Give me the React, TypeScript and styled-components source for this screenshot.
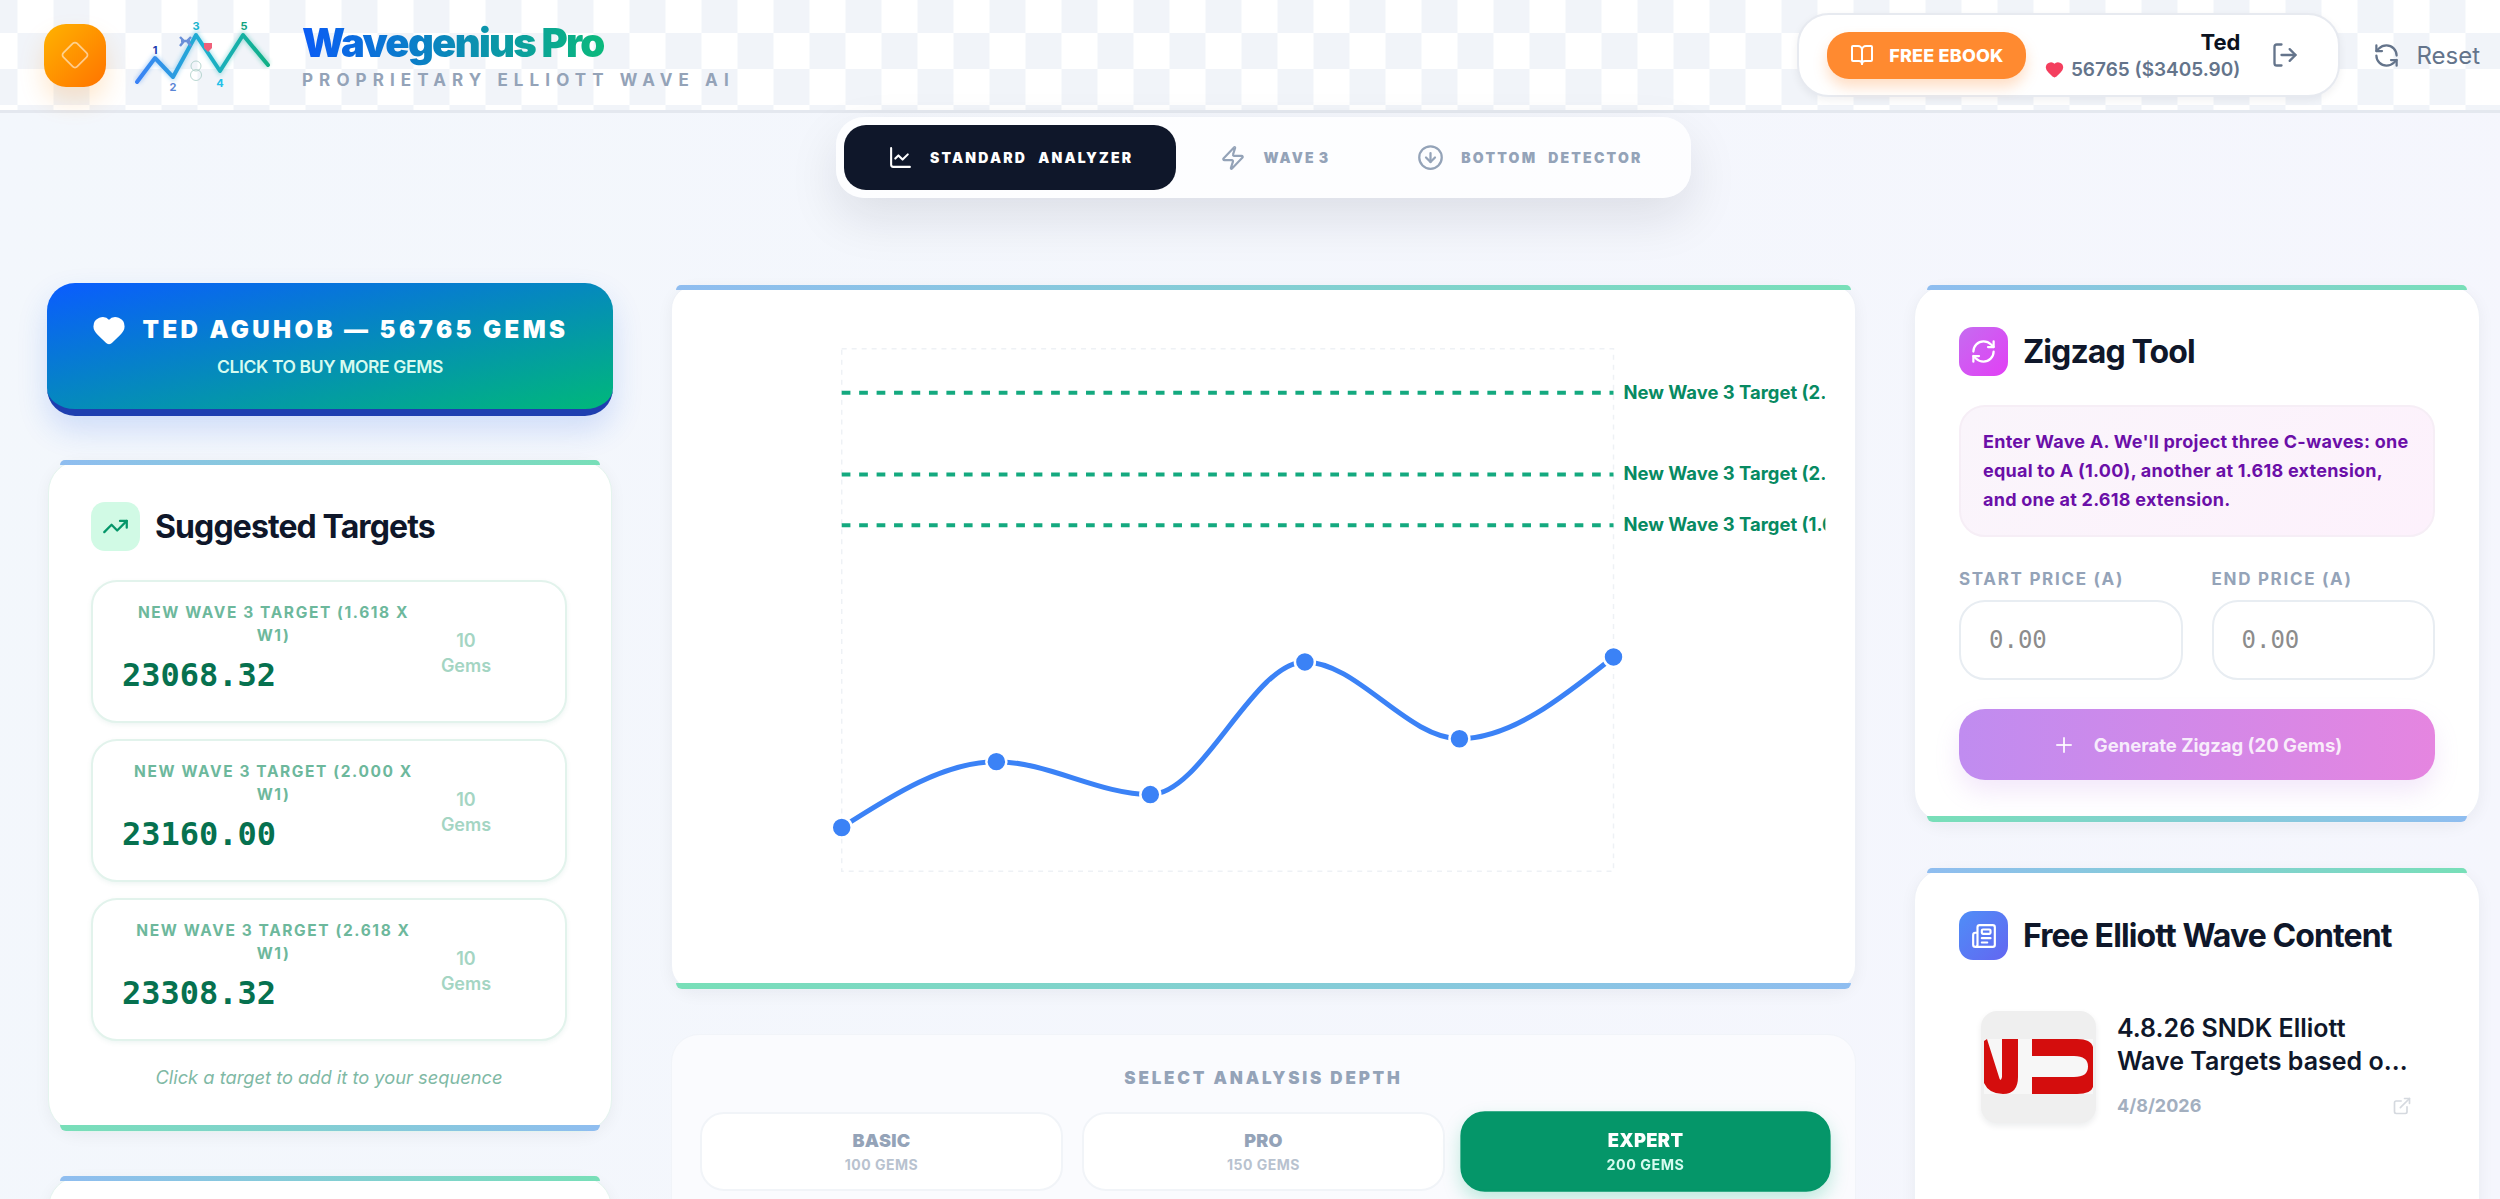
import React from 'react'
import styled, { createGlobalStyle } from 'styled-components';
import {
    BookOpen, ChartLine, CircleArrowDown, Diamond, ExternalLink, Heart, LogOut,
    Newspaper, Plus, RefreshCcw, RefreshCw, TrendingUp, Zap,
} from 'lucide-react';

const targets = [
    { label: "New Wave 3 Target (1.618 x W1)", value: "23068.32" },
    { label: "New Wave 3 Target (2.000 x W1)", value: "23160.00" },
    { label: "New Wave 3 Target (2.618 x W1)", value: "23308.32" },
];

const chartPoints = [
    [840.5, 828], [995.6, 762], [1150, 795], [1305, 662], [1460, 739], [1614.5, 657],
];

const chartLines = [
    { y: 392, label: "New Wave 3 Target (2.618 x W1)" },
    { y: 474, label: "New Wave 3 Target (2.000 x W1)" },
    { y: 525, label: "New Wave 3 Target (1.618 x W1)" },
];

const depths = [
    { name: "Basic", gems: "100 Gems", active: false },
    { name: "Pro", gems: "150 Gems", active: false },
    { name: "Expert", gems: "200 Gems", active: true },
];

const WaveLogo = () => (
    <LogoSvg viewBox="133 8 140 74">
        <defs>
            <linearGradient id="waveStroke" x1="137" x2="268" y1="0" y2="0" gradientUnits="userSpaceOnUse">
                <stop offset="0" stopColor="#3b82f6" />
                <stop offset="0.5" stopColor="#1eb0d0" />
                <stop offset="1" stopColor="#10b085" />
            </linearGradient>
            <filter id="waveGlow" x="-10%" y="-20%" width="120%" height="140%">
                <feGaussianBlur stdDeviation="2" />
            </filter>
        </defs>
        <polyline points="137,72 155,48 173,67 196,25 220,61 243,25 268,55" fill="none" stroke="url(#waveStroke)" strokeWidth="6" opacity="0.35" filter="url(#waveGlow)" />
        <polyline points="137,72 155,48 173,67 196,25 220,61 243,25 268,55" fill="none" stroke="url(#waveStroke)" strokeWidth="4" strokeLinecap="round" strokeLinejoin="round" />
        <g fontFamily="Inter, sans-serif" fontSize="11" fontWeight="700" textAnchor="middle">
            <text x="155" y="44" fill="#1e40af">1</text>
            <text x="173" y="81" fill="#5b86d6">2</text>
            <text x="196" y="20" fill="#1bb5cf">3</text>
            <text x="220" y="77" fill="#22c0e8">4</text>
            <text x="244" y="20" fill="#10a37f">5</text>
        </g>
        <path d="M180 27l4 4-4 5M191 27l-4 4 4 5M181 31h9" fill="none" stroke="#6a8fd8" strokeWidth="2.4" />
        <path d="M204 33h8v5l-4 4-4-4z" fill="#f0607a" />
        <circle cx="196" cy="56" r="5" fill="none" stroke="#9cc5bd" strokeWidth="0.7" />
        <circle cx="196" cy="65" r="5.5" fill="none" stroke="#9cc5bd" strokeWidth="0.7" />
    </LogoSvg>
);

const TargetChart = () => {
    const curve = "M840.5 828C892 795 944 762 995.6 762C1047 762 1098.7 795 1150 795C1202 795 1253 662 1305 662C1357 662 1408 739 1460 739C1511.5 739 1563 698 1614.5 657";
    return (
        <ChartSvg viewBox="671 285 1185 705">
            <defs>
                <clipPath id="chartClip">
                    <rect x="671" y="285" width="1156" height="705" />
                </clipPath>
            </defs>
            <rect x="840.5" y="348" width="774" height="524" fill="none" stroke="#eef1f5" strokeWidth="1.5" strokeDasharray="5 5" />
            <g clipPath="url(#chartClip)">
                {chartLines.map((line) => (
                    <g key={line.y}>
                        <line x1="840.5" x2="1614.5" y1={line.y} y2={line.y} stroke="#14a97f" strokeWidth="4" strokeDasharray="8.75 8.75" />
                        <ChartLabel x="1624.5" y={line.y + 6}>{line.label}</ChartLabel>
                    </g>
                ))}
            </g>
            <path d={curve} fill="none" stroke="#3b82f6" strokeWidth="5" />
            {chartPoints.map(([x, y]) => (
                <circle key={x} cx={x} cy={y} r="10" fill="#3b82f6" stroke="#fff" strokeWidth="2.5" />
            ))}
        </ChartSvg>
    );
};

const PostThumb = () => (
    <ThumbSvg viewBox="0 0 115 112">
        <rect x="3" y="28" width="109" height="55" fill="#f7f7f7" />
        <path d="M3 30L6 28L18 66Q19.500 72 21 66V28H37V66Q37 83 22 83Q8 83 3 72Z" fill="#d40d0d" />
        <path d="M51 28H96Q110 28 112 36V76Q110 83 96 83H51V66H93Q107 66 107 55.500Q107 45 93 45H51Z" fill="#d40d0d" />
    </ThumbSvg>
);

const App = () => {
    return (
        <>
            <GlobalStyle />
            <Page>
                <Header>
                    <Brand>
                        <LogoBadge><Diamond size={30} strokeWidth={1.4} /></LogoBadge>
                        <WaveLogo />
                        <BrandText>
                            <BrandTitle>Wavegenius Pro</BrandTitle>
                            <BrandSub>Proprietary Elliott Wave AI</BrandSub>
                        </BrandText>
                    </Brand>
                    <HeaderRight>
                        <UserBox>
                            <EbookButton><BookOpen size={24} strokeWidth={2} />Free Ebook</EbookButton>
                            <UserInfo>
                                <UserName>Ted</UserName>
                                <UserGems><Heart size={19} fill="#f43f5e" color="#f43f5e" />56765 ($3405.90)</UserGems>
                            </UserInfo>
                            <LogoutButton><LogOut size={28} strokeWidth={2} /></LogoutButton>
                        </UserBox>
                        <ResetButton><RefreshCcw size={27} strokeWidth={2} />Reset</ResetButton>
                    </HeaderRight>
                </Header>

                <TabsRow>
                    <Tabs>
                        <Tab $active $wordGap={6}><ChartLine size={25} strokeWidth={2} />Standard Analyzer</Tab>
                        <Tab $wordGap={-2}><Zap size={26} strokeWidth={2} />Wave 3</Tab>
                        <Tab $wordGap={6}><CircleArrowDown size={27} strokeWidth={2} />Bottom Detector</Tab>
                    </Tabs>
                </TabsRow>

                <Main>
                    <Column>
                        <GemButton>
                            <GemTitle><Heart size={34} fill="#fff" color="#fff" />Ted Aguhob — 56765 Gems</GemTitle>
                            <GemSub>Click to buy more gems</GemSub>
                        </GemButton>
                        <TargetsCard $inset={11} $bottomBar $green>
                            <CardHeader>
                                <IconBox $bg="#d1fae5"><TrendingUp size={27} color="#059669" strokeWidth={2} /></IconBox>
                                <CardTitle>Suggested Targets</CardTitle>
                            </CardHeader>
                            <TargetList>
                                {targets.map((target) => (
                                    <TargetRow key={target.value}>
                                        <TargetInfo>
                                            <TargetLabel>{target.label}</TargetLabel>
                                            <TargetValue>{target.value}</TargetValue>
                                        </TargetInfo>
                                        <TargetCost>10<br />Gems</TargetCost>
                                    </TargetRow>
                                ))}
                            </TargetList>
                            <TargetHint>Click a target to add it to your sequence</TargetHint>
                        </TargetsCard>
                        <Card $inset={11} $green />
                    </Column>

                    <CenterColumn>
                        <ChartCard $inset={4} $bottomBar>
                            <TargetChart />
                        </ChartCard>
                        <DepthPanel>
                            <DepthTitle>Select Analysis Depth</DepthTitle>
                            <DepthGrid>
                                {depths.map((depth) => (
                                    <DepthButton key={depth.name} $active={depth.active}>
                                        <DepthName>{depth.name}</DepthName>
                                        <DepthGems $active={depth.active}>{depth.gems}</DepthGems>
                                    </DepthButton>
                                ))}
                            </DepthGrid>
                        </DepthPanel>
                    </CenterColumn>

                    <RightColumn>
                        <ZigzagCard $inset={12} $bottomBar>
                            <CardHeader>
                                <IconBox $bg="linear-gradient(135deg, #c56cf0, #e23ff5)"><RefreshCw size={27} color="#fff" strokeWidth={2} /></IconBox>
                                <CardTitle>Zigzag Tool</CardTitle>
                            </CardHeader>
                            <InfoBox>Enter Wave A. We'll project three C-waves: one equal to A (1.00), another at 1.618 extension, and one at 2.618 extension.</InfoBox>
                            <PriceGrid>
                                <PriceField>
                                    <PriceLabel>Start Price (A)</PriceLabel>
                                    <PriceInput type="text" placeholder="0.00" />
                                </PriceField>
                                <PriceField>
                                    <PriceLabel>End Price (A)</PriceLabel>
                                    <PriceInput type="text" placeholder="0.00" />
                                </PriceField>
                            </PriceGrid>
                            <GenerateButton><Plus size={24} strokeWidth={2} />Generate Zigzag (20 Gems)</GenerateButton>
                        </ZigzagCard>
                        <ContentCard $inset={12}>
                            <CardHeader>
                                <IconBox $bg="linear-gradient(135deg, #4f8ef7, #6366f1)"><Newspaper size={26} color="#fff" strokeWidth={2} /></IconBox>
                                <CardTitle>Free Elliott Wave Content</CardTitle>
                            </CardHeader>
                            <PostRow>
                                <PostThumb />
                                <PostBody>
                                    <PostTitle>4.8.26 SNDK Elliott Wave Targets based on Fibonacci</PostTitle>
                                    <PostMeta>
                                        <PostDate>4/8/2026</PostDate>
                                        <ExternalLink size={20} color="#d5d9df" strokeWidth={2} />
                                    </PostMeta>
                                </PostBody>
                            </PostRow>
                        </ContentCard>
                    </RightColumn>
                </Main>
            </Page>
        </>
    );
};

export default App;

const GlobalStyle = createGlobalStyle`
    html, body {
        margin: 0;
        height: 100%;
        overflow: hidden;
    }

    * {
        box-sizing: border-box;
    }
`;

const Page = styled.div`
    height: 1199px;
    overflow: hidden;
    font-family: Inter, "Liberation Sans", sans-serif;
    color: #0f172a;
    background: linear-gradient(100deg, #f3f7fc, #f5f6fd);
`;

const Header = styled.header`
    height: 113px;
    padding: 13px 20px 0 44px;
    display: flex;
    justify-content: space-between;
    align-items: flex-start;
    background-color: #fff;
    background-image: repeating-conic-gradient(#f1f4f9 0 25%, #fff 0 50%);
    background-size: 72px 72px;
    background-position: 17.5px -3px;
    border-bottom: 3px solid #e4e8ef;
`;

const Brand = styled.div`
    display: flex;
    align-items: center;
    height: 84px;
`;

const LogoBadge = styled.div`
    width: 62px;
    height: 63px;
    display: flex;
    align-items: center;
    justify-content: center;
    border-radius: 22px;
    color: rgba(255, 255, 255, 0.55);
    background: linear-gradient(135deg, #ffb300, #ff7300);
    box-shadow: 0 14px 24px rgba(255, 150, 30, 0.22);
`;

const LogoSvg = styled.svg`
    width: 140px;
    height: 74px;
    margin-left: 27px;
    margin-right: 29px;
`;

const BrandText = styled.div`
    display: flex;
    flex-direction: column;
`;

const BrandTitle = styled.div`
    font-size: 40px;
    line-height: 46px;
    font-weight: 900;
    letter-spacing: -1.700px;
    width: fit-content;
    background: linear-gradient(90deg, #0b5cf5, #0bb97c);
    -webkit-background-clip: text;
    background-clip: text;
    color: transparent;
`;

const BrandSub = styled.div`
    margin-top: 3px;
    font-size: 17px;
    line-height: 22px;
    font-weight: 700;
    letter-spacing: 6.100px;
    white-space: nowrap;
    text-transform: uppercase;
    color: #94a3b8;
`;

const HeaderRight = styled.div`
    display: flex;
    align-items: center;
    gap: 33px;
`;

const UserBox = styled.div`
    width: 543px;
    height: 84px;
    padding: 0 39px 0 28px;
    display: flex;
    align-items: center;
    background: #fff;
    border: 2px solid #e7eaf0;
    border-radius: 32px;
    box-shadow: 0 3px 8px rgba(15, 23, 42, 0.06);
`;

const EbookButton = styled.button`
    flex: none;
    width: 199px;
    height: 47px;
    display: flex;
    align-items: center;
    justify-content: center;
    gap: 15px;
    border: none;
    border-radius: 22px;
    font-family: inherit;
    font-size: 18px;
    font-weight: 800;
    letter-spacing: 0.2px;
    white-space: nowrap;
    text-transform: uppercase;
    color: #fff;
    background: #ff8a30;
    box-shadow: 0 8px 14px rgba(255, 138, 48, 0.28);
`;

const UserInfo = styled.div`
    flex: 1;
    display: flex;
    flex-direction: column;
    align-items: flex-end;
`;

const UserName = styled.div`
    font-size: 22px;
    line-height: 26px;
    font-weight: 700;
    color: #0b1220;
`;

const UserGems = styled.div`
    margin-top: 3px;
    display: flex;
    align-items: center;
    gap: 7px;
    font-size: 19px;
    line-height: 24px;
    font-weight: 600;
    white-space: nowrap;
    color: #64748b;
`;

const LogoutButton = styled.div`
    margin-left: 31px;
    display: flex;
    color: #64748b;
`;

const ResetButton = styled.div`
    display: flex;
    align-items: center;
    gap: 16px;
    font-size: 24px;
    font-weight: 400;
    color: #64748b;
`;

const TabsRow = styled.div`
    padding: 4px 0 0 27px;
    display: flex;
    justify-content: center;
`;

const Tabs = styled.nav`
    width: 855px;
    height: 81px;
    padding: 8px;
    display: flex;
    background: rgba(255, 255, 255, 0.8);
    border-radius: 28px;
    box-shadow: 0 20px 50px rgba(15, 23, 42, 0.1);
`;

const Tab = styled.div<{ $active?: boolean; $wordGap: number }>`
    padding: 0 43px 0 44px;
    display: flex;
    align-items: center;
    gap: 17px;
    border-radius: 22px;
    font-size: 14px;
    font-weight: 900;
    letter-spacing: 2.200px;
    word-spacing: ${({ $wordGap }) => $wordGap}px;
    white-space: nowrap;
    text-transform: uppercase;
    color: ${({ $active }) => ($active ? "#fff" : "#94a3b8")};
    background: ${({ $active }) => ($active ? "#0f172a" : "transparent")};
`;

const Main = styled.main`
    margin-top: 86px;
    padding-left: 47px;
    display: grid;
    grid-template-columns: 566px 1185px 566px;
    column-gap: 58px;
    align-items: start;
`;

const Column = styled.div`
    display: flex;
    flex-direction: column;
    gap: 44px;
`;

const CenterColumn = styled(Column)`
    padding-top: 1px;
`;

const RightColumn = styled.div`
    display: flex;
    flex-direction: column;
    gap: 45px;
    padding-top: 1px;
`;

const GemButton = styled.div`
    margin-top: -1px;
    height: 133px;
    display: flex;
    flex-direction: column;
    align-items: center;
    justify-content: center;
    gap: 10px;
    padding-bottom: 3px;
    color: #fff;
    background: linear-gradient(to bottom right, #0a5cff, #00b87a);
    border-bottom: 7px solid #1e3fb0;
    border-radius: 28px;
    box-shadow: 0 14px 30px rgba(37, 99, 235, 0.18);
`;

const GemTitle = styled.div`
    display: flex;
    align-items: center;
    gap: 17px;
    font-size: 24px;
    line-height: 34px;
    font-weight: 900;
    letter-spacing: 3.400px;
    text-transform: uppercase;
`;

const GemSub = styled.div`
    font-size: 17.500px;
    line-height: 20px;
    font-weight: 600;
    letter-spacing: -0.4px;
    text-transform: uppercase;
    color: #d6fbef;
`;

const Card = styled.section<{ $inset: number; $bottomBar?: boolean; $green?: boolean }>`
    position: relative;
    margin: 0 1px;
    min-height: 100px;
    background: #fff;
    border: 1px solid ${({ $green }) => ($green ? "#e4f4ee" : "#eef1f7")};
    border-radius: 32px;
    box-shadow: 0 4px 16px rgba(15, 23, 42, 0.05);

    &::before {
        content: "";
        position: absolute;
        top: -1px;
        left: ${({ $inset }) => $inset}px;
        right: ${({ $inset }) => $inset}px;
        height: 5px;
        border-radius: 8px 8px 0 0;
        background: linear-gradient(90deg, #8fbdf0, #78dfb8);
    }

    &::after {
        content: "";
        display: ${({ $bottomBar }) => ($bottomBar ? "block" : "none")};
        position: absolute;
        bottom: 0;
        left: ${({ $inset }) => $inset}px;
        right: ${({ $inset }) => $inset}px;
        height: 6px;
        border-radius: 0 0 8px 8px;
        background: linear-gradient(90deg, #78dfb8, #8fbdf0);
    }
`;

const TargetsCard = styled(Card)`
    padding: 41px 44px 42px 42px;
`;

const ChartCard = styled(Card)`
    margin: 0;
    height: 705px;
    border-radius: 24px;
`;

const ChartSvg = styled.svg`
    display: block;
    width: 100%;
    height: 100%;
`;

const ChartLabel = styled.text`
    font-size: 18.500px;
    font-weight: 700;
    fill: #078a62;
`;

const ZigzagCard = styled(Card)`
    margin: 0;
    height: 538px;
    padding: 41px 44px 0;
`;

const ContentCard = styled(Card)`
    margin: 0;
    height: 500px;
    padding: 42px 44px 0;
`;

const CardHeader = styled.div`
    display: flex;
    align-items: center;
    gap: 15px;
`;

const IconBox = styled.div<{ $bg: string }>`
    flex: none;
    width: 49px;
    height: 49px;
    display: flex;
    align-items: center;
    justify-content: center;
    border-radius: 14px;
    background: ${({ $bg }) => $bg};
`;

const CardTitle = styled.h2`
    margin: 0;
    font-size: 32px;
    line-height: 40px;
    font-weight: 700;
    letter-spacing: -0.9px;
    white-space: nowrap;
    color: #0f172a;
`;

const TargetList = styled.div`
    margin-top: 29px;
    display: flex;
    flex-direction: column;
    gap: 16px;
`;

const TargetRow = styled.div`
    height: 143px;
    padding: 19px 0 0 29px;
    display: grid;
    grid-template-columns: 303px 82px;
    background: #fff;
    border: 2px solid #e2f3ec;
    border-radius: 26px;
    box-shadow: 0 2px 5px rgba(16, 120, 90, 0.07);
`;

const TargetInfo = styled.div`
    min-width: 0;
`;

const TargetLabel = styled.div`
    max-width: 285px;
    margin: 0 auto;
    font-size: 15.500px;
    line-height: 23px;
    font-weight: 700;
    letter-spacing: 1.600px;
    text-align: center;
    text-transform: uppercase;
    color: #6db89c;
`;

const TargetValue = styled.div`
    margin-top: 8px;
    font-family: "DejaVu Sans Mono", monospace;
    font-size: 32px;
    line-height: 40px;
    font-weight: 700;
    color: #06714f;
`;

const TargetCost = styled.div`
    align-self: center;
    margin-bottom: 16px;
    text-align: center;
    font-size: 18px;
    line-height: 25px;
    font-weight: 600;
    color: #a4d5c3;
`;

const TargetHint = styled.div`
    margin-top: 24px;
    text-align: center;
    font-size: 18.300px;
    line-height: 24px;
    font-style: italic;
    color: #7fb9a5;
`;

const DepthPanel = styled.div`
    height: 220px;
    padding: 32px 28px 0;
    background: rgba(255, 255, 255, 0.55);
    border: 1px solid #f1f4f9;
    border-radius: 28px;
`;

const DepthTitle = styled.div`
    text-align: center;
    font-size: 17px;
    line-height: 22px;
    font-weight: 900;
    letter-spacing: 2.800px;
    text-transform: uppercase;
    color: #94a3b8;
`;

const DepthGrid = styled.div`
    margin-top: 23px;
    display: grid;
    grid-template-columns: repeat(3, 1fr);
    column-gap: 19px;
`;

const DepthButton = styled.div<{ $active: boolean }>`
    height: 79px;
    display: flex;
    flex-direction: column;
    align-items: center;
    justify-content: center;
    gap: 4px;
    border-radius: 24px;
    color: ${({ $active }) => ($active ? "#fff" : "#94a3b8")};
    background: ${({ $active }) => ($active ? "#059669" : "#fff")};
    border: 2px solid ${({ $active }) => ($active ? "#059669" : "#f1f4f8")};
    transform: ${({ $active }) => ($active ? "scale(1.02)" : "none")};
    box-shadow: ${({ $active }) => ($active ? "0 8px 18px rgba(16, 185, 129, 0.25)" : "none")};
`;

const DepthName = styled.div`
    font-size: 18px;
    line-height: 22px;
    font-weight: 900;
    letter-spacing: 0.3px;
    text-transform: uppercase;
`;

const DepthGems = styled.div<{ $active: boolean }>`
    font-size: 14px;
    line-height: 18px;
    font-weight: 700;
    letter-spacing: 0.5px;
    text-transform: uppercase;
    color: ${({ $active }) => ($active ? "#d6fbef" : "#b8c2cf")};
`;

const InfoBox = styled.div`
    margin-top: 29px;
    height: 132px;
    padding: 20px 22px;
    font-size: 18px;
    line-height: 29px;
    font-weight: 700;
    letter-spacing: 0.25px;
    color: #6b0fa8;
    background: linear-gradient(135deg, #faf5fb, #fdf1fc);
    border: 2px solid #f6eef6;
    border-radius: 26px;
`;

const PriceGrid = styled.div`
    margin-top: 32px;
    display: grid;
    grid-template-columns: 1fr 1fr;
    column-gap: 29px;
`;

const PriceField = styled.div`
    display: flex;
    flex-direction: column;
    gap: 11px;
`;

const PriceLabel = styled.label`
    font-size: 17px;
    line-height: 20px;
    font-weight: 700;
    letter-spacing: 1.700px;
    white-space: nowrap;
    text-transform: uppercase;
    color: #94a3b8;
`;

const PriceInput = styled.input`
    width: 100%;
    height: 80px;
    padding: 0 28px;
    font-family: "DejaVu Sans Mono", monospace;
    font-size: 24px;
    color: #0f172a;
    background: #fff;
    border: 2px solid #e8edf2;
    border-radius: 26px;

    &::placeholder {
        color: #8c8c8c;
    }
`;

const GenerateButton = styled.button`
    margin-top: 29px;
    width: 100%;
    height: 71px;
    display: flex;
    align-items: center;
    justify-content: center;
    gap: 18px;
    border: none;
    border-radius: 26px;
    font-family: inherit;
    font-size: 18.500px;
    font-weight: 700;
    color: rgba(255, 255, 255, 0.85);
    background: linear-gradient(90deg, #c08cf0, #e585e0);
    box-shadow: 0 12px 24px rgba(190, 130, 230, 0.18);
`;

const PostRow = styled.div`
    margin-top: 51px;
    padding-left: 22px;
    display: flex;
    gap: 21px;
`;

const ThumbSvg = styled.svg`
    flex: none;
    width: 115px;
    height: 112px;
    background: #efefef;
    border-radius: 16px;
    box-shadow: 0 3px 6px rgba(15, 23, 42, 0.08);
`;

const PostBody = styled.div`
    flex: none;
    width: 295px;
    padding-top: 1px;
`;

const PostTitle = styled.div`
    display: -webkit-box;
    -webkit-box-orient: vertical;
    -webkit-line-clamp: 2;
    overflow: hidden;
    font-size: 25px;
    line-height: 33px;
    font-weight: 600;
    color: #0f172a;
`;

const PostMeta = styled.div`
    margin-top: 16px;
    display: flex;
    align-items: center;
    justify-content: space-between;
`;

const PostDate = styled.div`
    font-size: 18px;
    line-height: 24px;
    font-weight: 700;
    color: #a3afbf;
`;
